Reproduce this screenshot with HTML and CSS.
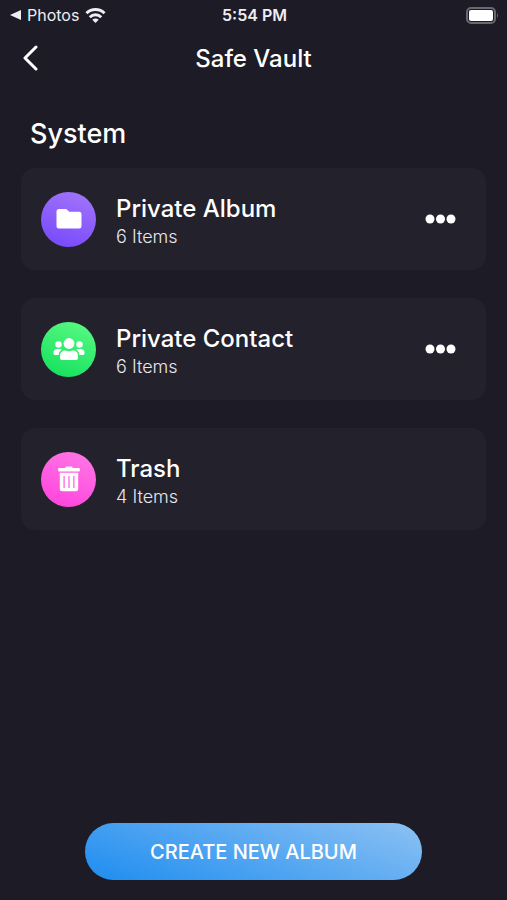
FILE: index.html
```html
<!DOCTYPE html>
<html lang="en">
<head>
    <meta charset="UTF-8">
    <meta name="viewport" content="width=device-width, initial-scale=1.0">
    <title>Safe Vault</title>
    <link rel="stylesheet" href="styles.css">
</head>
<body>
    <div class="status-bar">
        <div class="status-left">
            <a class="back-to-app" href="#">
                <svg width="11" height="10" viewBox="0 0 11 10"><path d="M11 0v10L0 5z" fill="currentColor"/></svg>
                <span>Photos</span>
            </a>
            <svg width="21" height="15" viewBox="0 0 20 15" fill="none" stroke="currentColor" stroke-width="3">
                <path d="M1 5.3a12.800 12.800 0 0 1 18 0M4.300 9.200a8.100 8.100 0 0 1 11.400 0"/>
                <path d="M10 15l-3.200-3.200a4.500 4.500 0 0 1 6.400 0z" fill="currentColor" stroke="none"/>
            </svg>
        </div>
        <span class="time">5:54 PM</span>
        <svg class="battery" width="33" height="17" viewBox="0 0 33 17">
            <rect x="1" y="1" width="28" height="15" rx="4" fill="none" stroke="#69676f" stroke-width="2"/>
            <rect x="3" y="3" width="24" height="11" rx="2" fill="#fff"/>
            <path d="M31 6q2 2.500 0 5z" fill="#69676f"/>
        </svg>
    </div>

    <header class="nav-bar">
        <button class="back" type="button" aria-label="Back">
            <svg width="15" height="26" viewBox="0 0 15 26" fill="none" stroke="currentColor" stroke-width="3" stroke-linecap="round" stroke-linejoin="round"><path d="M13 2L2 13l11 11"/></svg>
        </button>
        <h1>Safe Vault</h1>
    </header>

    <main>
        <h2>System</h2>
        <ul class="albums">
            <li class="card">
                <div class="icon purple">
                    <svg width="26" height="20" viewBox="0 0 26 20" fill="currentColor"><path d="M3 0h6.500q1 0 1.700.7L13.200 2.700H23q2.500 0 2.500 2.500V17q0 2.500-2.500 2.500H3Q.5 19.500.5 17V2.500Q.5 0 3 0z"/></svg>
                </div>
                <div class="info">
                    <h3>Private Album</h3>
                    <p>6 Items</p>
                </div>
                <button class="more" type="button" aria-label="Private Album options">
                    <svg width="31" height="10" viewBox="0 0 31 10" fill="currentColor"><circle cx="5" cy="5" r="4.500"/><circle cx="15.500" cy="5" r="4.500"/><circle cx="26" cy="5" r="4.500"/></svg>
                </button>
            </li>
            <li class="card">
                <div class="icon green">
                    <svg width="32" height="24" viewBox="0 0 32 24" fill="currentColor">
                        <circle cx="16" cy="6.500" r="5.400"/>
                        <circle cx="5.500" cy="7.500" r="3.200"/>
                        <circle cx="26.500" cy="7.500" r="3.200"/>
                        <path d="M7 21v-2q0-5.500 5.500-5.500 3.500 1.500 7 0 5.500 0 5.500 5.500V21q0 2-2 2H9q-2 0-2-2z"/>
                        <path d="M8.800 12.600Q6 14.500 5.600 18H2q-1.500 0-1.500-1.500V15.500q0-3.500 4-3.500h2.500q1 0 1.800.6zM23.200 12.600q2.800 1.900 3.200 5.400H30q1.500 0 1.500-1.500V15.500q0-3.500-4-3.500H25q-1 0-1.800.6z"/>
                    </svg>
                </div>
                <div class="info">
                    <h3>Private Contact</h3>
                    <p>6 Items</p>
                </div>
                <button class="more" type="button" aria-label="Private Contact options">
                    <svg width="31" height="10" viewBox="0 0 31 10" fill="currentColor"><circle cx="5" cy="5" r="4.500"/><circle cx="15.500" cy="5" r="4.500"/><circle cx="26" cy="5" r="4.500"/></svg>
                </button>
            </li>
            <li class="card">
                <div class="icon pink">
                    <svg width="22" height="26" viewBox="0 0 22 26" fill="currentColor">
                        <path d="M7.500 2V1.500Q7.500.5 8.500.5h5q1 0 1 1V2H21q.8 0 .8.8v1.900q0 .8-.8.8H1q-.8 0-.8-.8V2.800Q.2 2 1 2z"/>
                        <path fill-rule="evenodd" d="M1.800 6.800h18.400V23q0 2.300-2.300 2.300H4.100Q1.800 25.300 1.800 23zM5.500 10v12h1.200V10zm4.900 0v12h1.200V10zm4.900 0v12h1.200V10z"/>
                    </svg>
                </div>
                <div class="info">
                    <h3>Trash</h3>
                    <p>4 Items</p>
                </div>
            </li>
        </ul>
    </main>

    <footer>
        <button class="create" type="button">CREATE NEW ALBUM</button>
    </footer>
</body>
</html>
```

FILE: styles.css
```css
* {
    box-sizing: border-box;
}

body {
    font-family: Inter, sans-serif;
    margin: 0;
    min-height: 100vh;
    display: flex;
    flex-direction: column;
    background: #1d1b26;
    color: #fff;
}

h1, h2, h3, p, ul {
    margin: 0;
    padding: 0;
    font-weight: 500;
}

svg {
    display: block;
}

button {
    padding: 0;
    border: none;
    background: none;
    color: inherit;
    font-family: inherit;
    cursor: pointer;
}

.status-bar {
    display: grid;
    grid-template-columns: 1fr auto 1fr;
    align-items: center;
    height: 30px;
    padding: 0 8px 0 10px;
    font-size: 16px;
    color: #eeedf2;
}

.status-left,
.back-to-app {
    display: flex;
    align-items: center;
    gap: 6px;
    color: inherit;
    text-decoration: none;
}

.time {
    font-weight: 600;
}

.battery {
    justify-self: end;
}

.nav-bar {
    display: grid;
    grid-template-columns: 40px 1fr 40px;
    align-items: center;
    height: 56px;
    padding: 0 23px;
}

.nav-bar h1 {
    font-size: 24px;
    text-align: center;
}

main {
    flex: 1;
    padding: 32px 21px;
}

h2 {
    padding-left: 9px;
    margin-bottom: 18px;
    font-size: 27px;
    line-height: 32px;
}

.albums {
    display: flex;
    flex-direction: column;
    gap: 28px;
    list-style: none;
}

.card {
    display: flex;
    align-items: center;
    gap: 20px;
    min-height: 102px;
    padding: 20px;
    border-radius: 14px;
    background: #23212c;
}

.icon {
    display: flex;
    align-items: center;
    justify-content: center;
    width: 55px;
    height: 55px;
    border-radius: 50%;
}

.purple { background: linear-gradient(20deg, #7446fb, #a477fb); }
.green { background: linear-gradient(20deg, #10df5c, #5cfa84); }
.pink { background: linear-gradient(20deg, #ff40dd, #ff7ae6); }

.info {
    flex: 1;
    padding-top: 6px;
}

.info h3 {
    font-size: 24px;
    line-height: 30px;
}

.info p {
    font-size: 18px;
    font-weight: 300;
    line-height: 26px;
    color: #e8e7ec;
}

.more {
    padding: 10px;
}

footer {
    display: flex;
    justify-content: center;
    padding: 0 20px 20px;
}

.create {
    width: 72%;
    height: 57px;
    border-radius: 29px;
    background: linear-gradient(20deg, #1e8df0, #8cc1f3);
    font-size: 20px;
    font-weight: 500;
}
```
